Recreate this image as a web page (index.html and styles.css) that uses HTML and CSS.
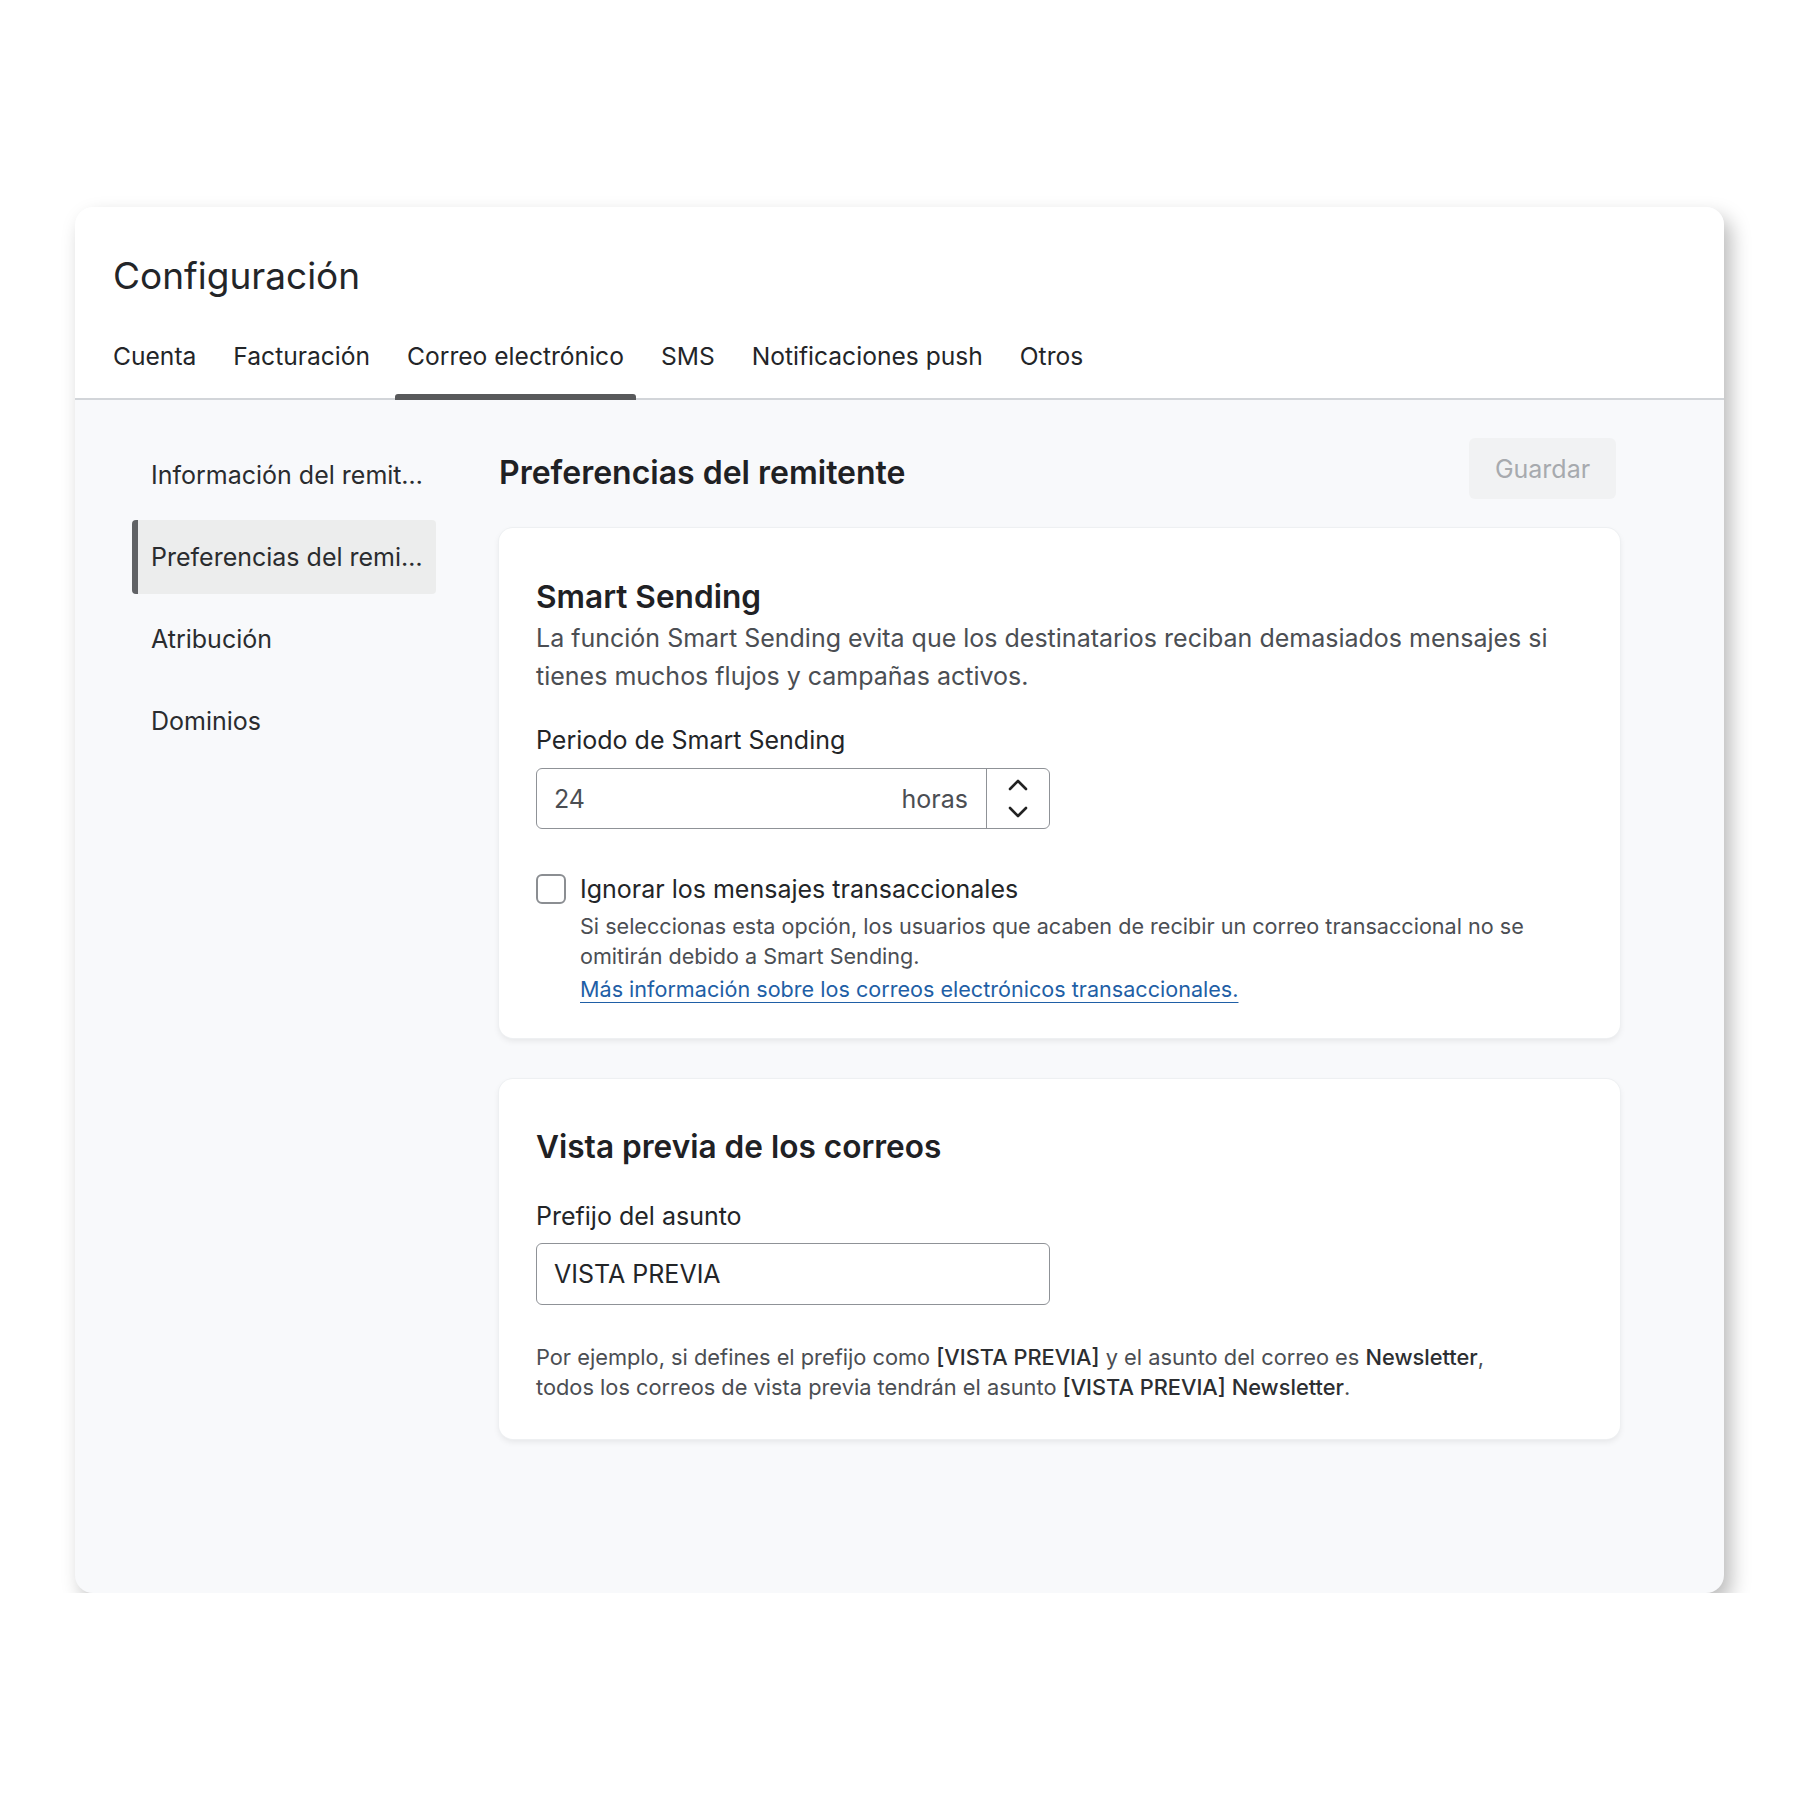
FILE: index.html
```html
<!DOCTYPE html>
<html lang="es">
<head>
    <meta charset="UTF-8">
    <title>Configuración</title>
    <link rel="stylesheet" href="styles.css">
</head>
<body>
    <div class="window">
        <header class="top">
            <h1 class="title">Configuración</h1>
            <nav class="tabs">
                <a class="tab">Cuenta</a>
                <a class="tab">Facturación</a>
                <a class="tab active">Correo electrónico</a>
                <a class="tab">SMS</a>
                <a class="tab">Notificaciones push</a>
                <a class="tab">Otros</a>
            </nav>
        </header>

        <div class="content">
            <aside class="sidebar">
                <a class="side-item">Información del remitente</a>
                <a class="side-item active">Preferencias del remitente</a>
                <a class="side-item">Atribución</a>
                <a class="side-item">Dominios</a>
            </aside>

            <main class="main">
                <div class="main-head">
                    <h2>Preferencias del remitente</h2>
                    <button class="save" disabled>Guardar</button>
                </div>

                <section class="card">
                    <h3>Smart Sending</h3>
                    <p class="desc">La función Smart Sending evita que los destinatarios reciban demasiados mensajes si tienes muchos flujos y campañas activos.</p>

                    <div class="label">Periodo de Smart Sending</div>
                    <div class="field number">
                        <span class="value muted">24</span>
                        <span class="unit">horas</span>
                        <div class="stepper">
                            <svg width="22" height="13" viewBox="0 0 22 13"><polyline points="3,11 11,3 19,11" fill="none" stroke="#222" stroke-width="2.6" stroke-linecap="round" stroke-linejoin="round"/></svg>
                            <svg width="22" height="13" viewBox="0 0 22 13"><polyline points="3,2 11,10 19,2" fill="none" stroke="#222" stroke-width="2.6" stroke-linecap="round" stroke-linejoin="round"/></svg>
                        </div>
                    </div>

                    <label class="check-row">
                        <span class="checkbox"></span>
                        <span>Ignorar los mensajes transaccionales</span>
                    </label>
                    <div class="help">
                        <p>Si seleccionas esta opción, los usuarios que acaben de recibir un correo transaccional no se omitirán debido a Smart Sending.</p>
                        <a class="link" href="#">Más información sobre los correos electrónicos transaccionales.</a>
                    </div>
                </section>

                <section class="card second">
                    <h3>Vista previa de los correos</h3>

                    <div class="label">Prefijo del asunto</div>
                    <div class="field text">
                        <span class="value">VISTA PREVIA</span>
                    </div>

                    <p class="example">Por ejemplo, si defines el prefijo como <b>[VISTA PREVIA]</b> y el asunto del correo es <b>Newsletter</b>, todos los correos de vista previa tendrán el asunto <b>[VISTA PREVIA] Newsletter</b>.</p>
                </section>
            </main>
        </div>
    </div>
</body>
</html>
```

FILE: styles.css
```css
body {
    margin: 0;
    background: #ffffff;
    font-family: Inter, "Noto Sans", sans-serif;
    color: #222427;
}

.window {
    margin: 207px 0 0 75px;
    width: 1649px;
    height: 1386px;
    border-radius: 18px;
    background: #f8f9fb;
    box-shadow: 7px 10px 20px rgba(0, 0, 0, 0.27);
    overflow: hidden;
    display: flex;
    flex-direction: column;
}

/* header with title and tabs */
.top {
    background: #ffffff;
    padding-top: 46px;
    border-bottom: 2px solid #d2d5d9;
}

.title {
    margin: 0;
    padding-left: 38px;
    font-size: 37px;
    line-height: 46px;
    font-weight: 400;
    color: #232528;
}

.tabs {
    display: flex;
    gap: 13px;
    margin-top: 42px;
    margin-bottom: -2px;
    padding-left: 26px;
}

.tab {
    display: flex;
    flex-direction: column;
    padding: 0 12px;
    font-size: 24.6px;
    line-height: 30px;
    color: #232528;
}

.tab::after {
    content: "";
    display: block;
    height: 6px;
    margin: 23px -12px 0;
    border-radius: 3px 3px 0 0;
}

.tab.active::after {
    background: #58595b;
}

/* body */
.content {
    flex: 1;
    display: flex;
    gap: 63px;
    padding: 38px 104px 0 57px;
}

.sidebar {
    width: 304px;
    flex-shrink: 0;
    display: flex;
    flex-direction: column;
    gap: 8px;
}

.side-item {
    height: 74px;
    line-height: 74px;
    padding: 0 10px 0 13px;
    border-left: 6px solid transparent;
    border-radius: 4px;
    font-size: 25px;
    color: #2a2c2f;
    white-space: nowrap;
    overflow: hidden;
    text-overflow: ellipsis;
}

.side-item.active {
    background: #eceded;
    border-left-color: #606265;
}

.main {
    flex: 1;
}

.main-head {
    display: flex;
    justify-content: space-between;
    align-items: center;
    height: 61px;
    margin-bottom: 29px;
}

.main-head h2 {
    margin: 8px 0 0;
    font-size: 32px;
    font-weight: 600;
    color: #1f2124;
}

.save {
    width: 147px;
    height: 61px;
    margin-right: 4px;
    border: none;
    border-radius: 6px;
    background: #f1f2f3;
    color: #a7aaae;
    font-family: inherit;
    font-size: 25px;
}

/* cards */
.card {
    background: #ffffff;
    border-radius: 14px;
    padding: 51px 37px 34px;
    box-shadow: 0 0 0 1px #eef0f2, 0 3px 6px rgba(0, 0, 0, 0.08);
}

.card.second {
    margin-top: 41px;
    padding: 50px 37px 37px;
}

.card h3 {
    margin: 0;
    font-size: 31.6px;
    line-height: 36px;
    font-weight: 600;
    color: #1f2124;
}

.desc {
    margin: 4px 0 0;
    font-size: 25px;
    line-height: 38px;
    color: #4b4e53;
}

.label {
    margin-top: 30px;
    font-size: 25px;
    line-height: 30px;
    color: #232528;
}

.second .label {
    margin-top: 36px;
}

.field {
    width: 514px;
    height: 61px;
    box-sizing: border-box;
    margin-top: 13px;
    border: 1.5px solid #8f9297;
    border-radius: 6px;
    display: flex;
    align-items: center;
    font-size: 25px;
}

.field.text {
    height: 62px;
    margin-top: 12px;
}

.value {
    flex: 1;
    padding-left: 17px;
    color: #232528;
}

.value.muted {
    color: #4b4e53;
}

.unit {
    padding-right: 18px;
    color: #4b4e53;
}

.stepper {
    width: 62px;
    height: 100%;
    border-left: 1.5px solid #8f9297;
    display: flex;
    flex-direction: column;
    align-items: center;
    justify-content: center;
    gap: 15px;
}

.check-row {
    display: flex;
    align-items: center;
    gap: 14px;
    margin-top: 45px;
    font-size: 25px;
    line-height: 30px;
    color: #232528;
}

.checkbox {
    width: 30px;
    height: 30px;
    box-sizing: border-box;
    border: 2px solid #8b8e92;
    border-radius: 6px;
}

.help {
    margin: 7px 0 0 44px;
    font-size: 21.6px;
    line-height: 30px;
    color: #4b4e53;
}

.help p {
    margin: 0;
}

.link {
    display: inline-block;
    margin-top: 3px;
    color: #1f5fa6;
    text-decoration: underline;
    text-underline-offset: 5px;
    text-decoration-thickness: 1px;
}

.example {
    max-width: 980px;
    margin: 37px 0 0;
    font-size: 21.8px;
    line-height: 30px;
    color: #4b4e53;
}

.example b {
    font-weight: 500;
    color: #2c2e31;
}
```
